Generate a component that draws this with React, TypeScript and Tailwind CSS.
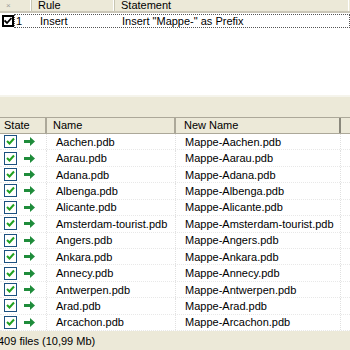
const files = [
  'Aachen',
  'Aarau',
  'Adana',
  'Albenga',
  'Alicante',
  'Amsterdam-tourist',
  'Angers',
  'Ankara',
  'Annecy',
  'Antwerpen',
  'Arad',
  'Arcachon',
]

function XpCheck() {
  return (
    <div className="flex h-[13px] w-[13px] items-center justify-center border border-[#1c5180] bg-white">
      <svg width="9" height="9" viewBox="0 0 9 9">
        <path d="M1 4 L3.5 6.5 L8 1.5" stroke="#21a121" strokeWidth="2" fill="none" />
      </svg>
    </div>
  )
}

function ClassicCheck() {
  return (
    <div className="flex h-[12px] w-[12px] items-center justify-center border-2 border-black bg-white">
      <svg width="8" height="8" viewBox="0 0 8 8">
        <path d="M0.5 3.5 L3 6 L7.5 1" stroke="#000" strokeWidth="1.8" fill="none" />
      </svg>
    </div>
  )
}

function Arrow() {
  return (
    <svg width="12" height="9" viewBox="0 0 12 9">
      <rect x="0" y="3" width="7" height="3" fill="#1f8c3b" />
      <path d="M6 0 L11 4.5 L6 9 Z" fill="#1f8c3b" />
    </svg>
  )
}

function HeaderCell({ w, children, last }: { w: string; children?: React.ReactNode; last?: boolean }) {
  return (
    <div
      className={`${w} flex h-full items-center border-r ${last ? 'border-transparent' : 'border-[#c7c5b2]'} pl-[6px] shadow-[inset_-1px_0_0_#fff]`}
    >
      {children}
    </div>
  )
}

export default function App() {
  return (
    <div
      className="flex h-[350px] w-[350px] flex-col overflow-hidden bg-white text-[11px] leading-[14px] text-black"
      style={{ fontFamily: '"Liberation Sans", Tahoma, sans-serif' }}
    >
      {/* rules list */}
      <div className="flex h-[13px] shrink-0 border-b-2 border-[#cbc7b8] bg-[#ece9d8] leading-[11px]">
        <HeaderCell w="w-[32px]">
          <span className="text-[8px] text-[#9a9a9a]">×</span>
        </HeaderCell>
        <HeaderCell w="w-[83px]">Rule</HeaderCell>
        <HeaderCell w="flex-1" last>
          Statement
        </HeaderCell>
      </div>
      <div className="flex h-[15px] shrink-0 items-center">
        <div className="flex w-[14px] shrink-0 justify-center pl-[1px]">
          <ClassicCheck />
        </div>
        <div className="flex h-[14px] flex-1 items-center border border-dotted border-[#555]">
          <span className="w-[24px] pl-[1px]">1</span>
          <span className="w-[83px] pl-[1px]">Insert</span>
          <span className="flex-1">Insert "Mappe-" as Prefix</span>
        </div>
      </div>
      <div className="h-[67px] shrink-0" />

      {/* splitter */}
      <div className="h-[22px] shrink-0 border-t-2 border-[#f5f4ec] bg-[#ece9d8]" />

      {/* files list */}
      <div className="flex h-[17px] shrink-0 border-y border-[#aca899] bg-[#ece9d8] leading-[15px]">
        <div className="flex w-[47px] items-center border-r-2 border-[#aca899] pl-[4px]">State</div>
        <div className="flex w-[129px] items-center border-r-2 border-[#aca899] pl-[6px]">Name</div>
        <div className="flex w-[165px] items-center border-r-2 border-[#8a887c] pl-[8px]">New Name</div>
        <div className="flex-1" />
      </div>
      <div className="flex min-h-0 flex-1 flex-col">
        {files.map(f => (
          <div key={f} className="flex min-h-0 flex-1 items-center border-b border-dotted border-[#e8e8e8]">
            <div className="flex h-full w-[47px] items-center gap-[7px] border-r border-dotted border-[#e0e0e0] pl-[4px]">
              <XpCheck />
              <Arrow />
            </div>
            <div className="flex h-full w-[129px] items-center border-r border-dotted border-[#e0e0e0] pl-[9px]">
              {f}.pdb
            </div>
            <div className="flex h-full w-[165px] items-center border-r border-dotted border-[#e0e0e0] pl-[9px]">
              Mappe-{f}.pdb
            </div>
            <div className="flex-1" />
          </div>
        ))}
      </div>

      {/* status bar */}
      <div className="flex h-[19px] shrink-0 items-center bg-[#ece9d8]">
        <span className="-ml-[2px]">409 files (10,99 Mb)</span>
      </div>
    </div>
  )
}
